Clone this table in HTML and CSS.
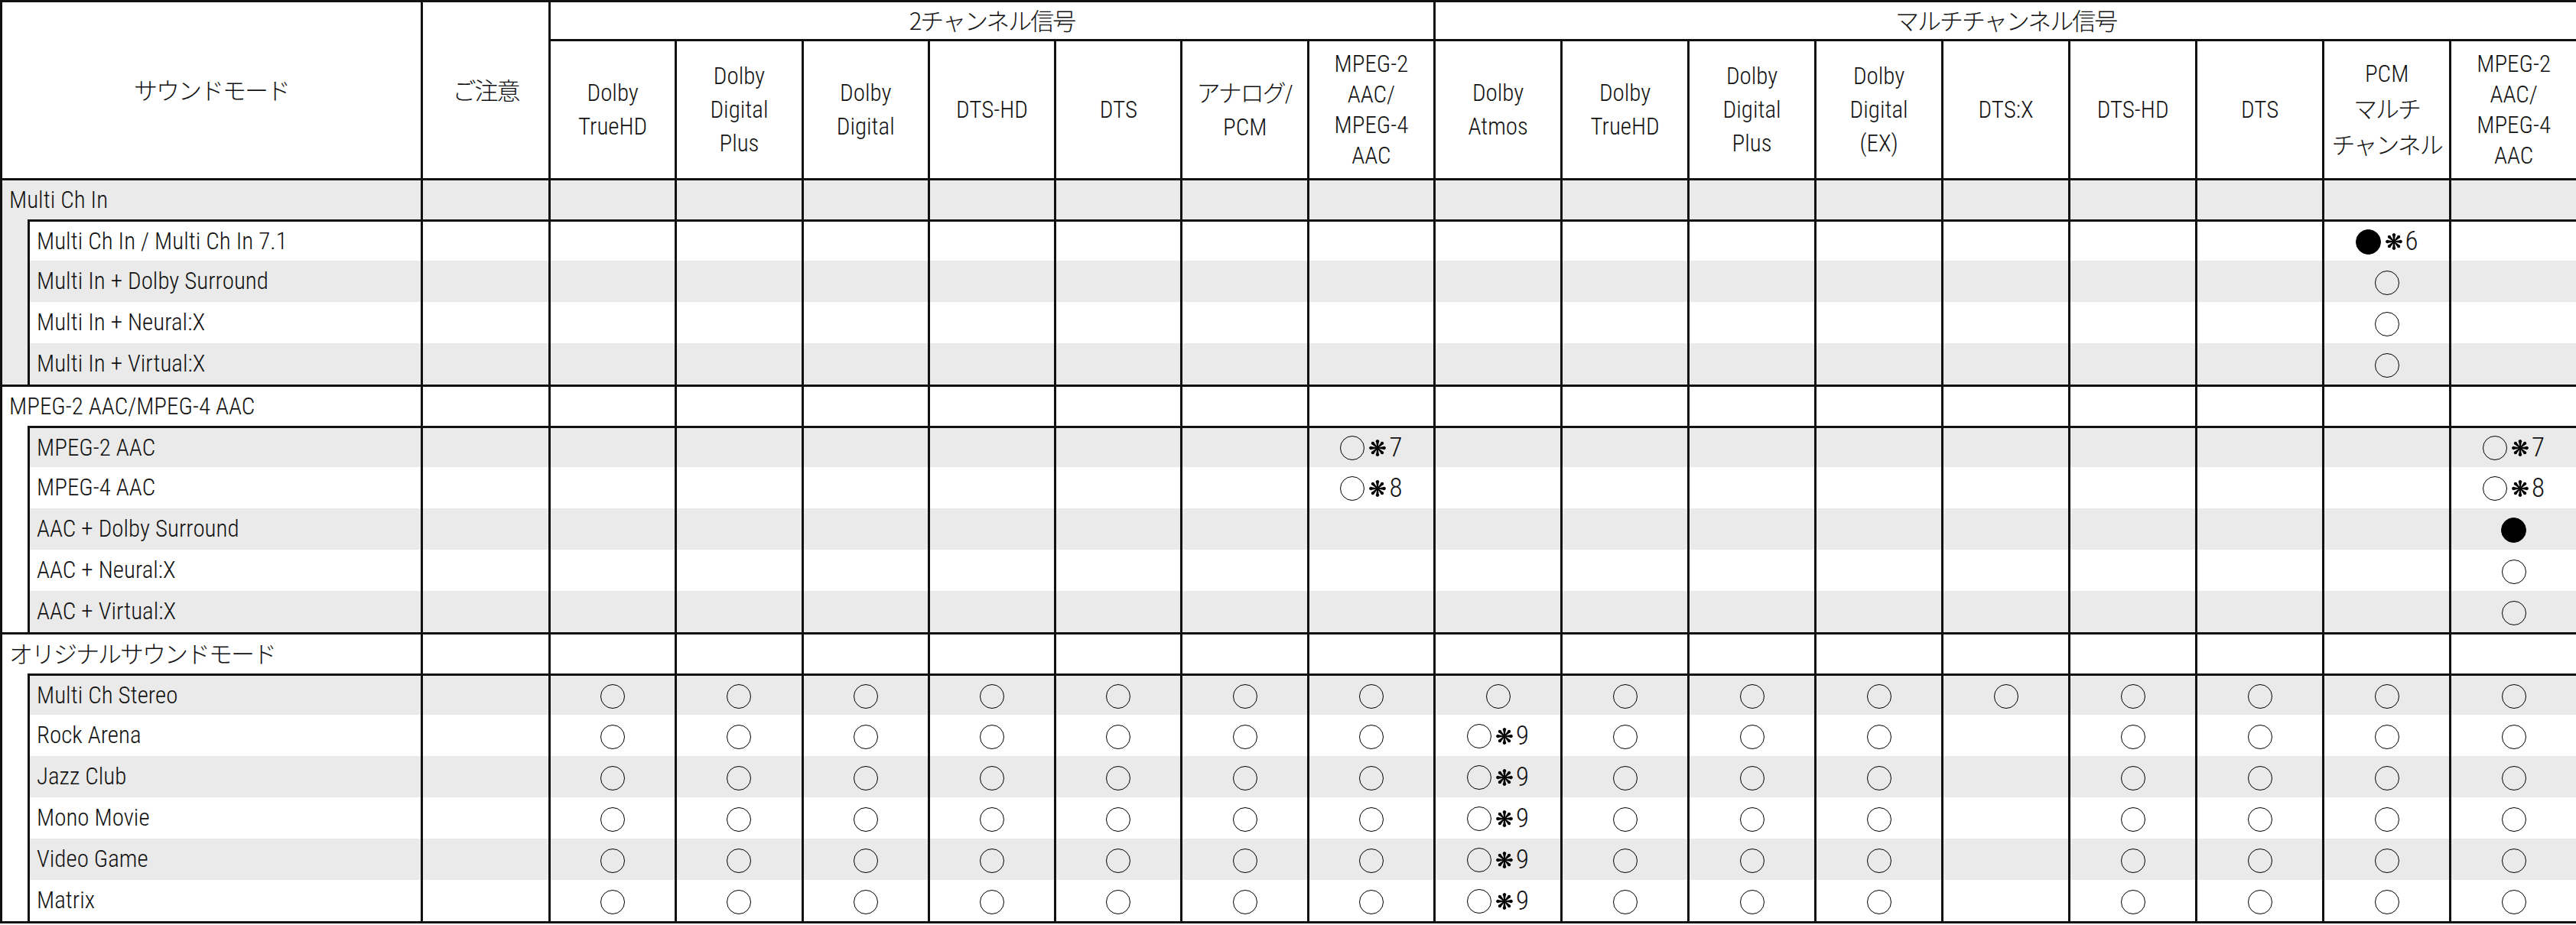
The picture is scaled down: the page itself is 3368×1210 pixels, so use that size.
FILE: index.html
```html
<!DOCTYPE html>
<html lang="ja">
<head>
<meta charset="utf-8">
<title>サウンドモード</title>
<link rel="stylesheet" href="styles.css">
</head>
<body>
<svg class="defs" aria-hidden="true">
  <symbol id="ast" viewBox="-11 -11 22 22">
    <path d="M-0.6 0 L-1.7 -7.2 A2.2 2.2 0 1 1 1.7 -7.2 L0.6 0 Z"/>
    <path transform="rotate(45)" d="M-0.6 0 L-1.7 -7.2 A2.2 2.2 0 1 1 1.7 -7.2 L0.6 0 Z"/>
    <path transform="rotate(90)" d="M-0.6 0 L-1.7 -7.2 A2.2 2.2 0 1 1 1.7 -7.2 L0.6 0 Z"/>
    <path transform="rotate(135)" d="M-0.6 0 L-1.7 -7.2 A2.2 2.2 0 1 1 1.7 -7.2 L0.6 0 Z"/>
    <path transform="rotate(180)" d="M-0.6 0 L-1.7 -7.2 A2.2 2.2 0 1 1 1.7 -7.2 L0.6 0 Z"/>
    <path transform="rotate(225)" d="M-0.6 0 L-1.7 -7.2 A2.2 2.2 0 1 1 1.7 -7.2 L0.6 0 Z"/>
    <path transform="rotate(270)" d="M-0.6 0 L-1.7 -7.2 A2.2 2.2 0 1 1 1.7 -7.2 L0.6 0 Z"/>
    <path transform="rotate(315)" d="M-0.6 0 L-1.7 -7.2 A2.2 2.2 0 1 1 1.7 -7.2 L0.6 0 Z"/>
  </symbol>
</svg>
<table class="modes">
  <colgroup>
    <col class="c-strip"><col class="c-label"><col class="c-note">
    <col class="c-2ch"><col class="c-2ch"><col class="c-2ch"><col class="c-2ch"><col class="c-2ch"><col class="c-2ch"><col class="c-2ch">
    <col class="c-mc"><col class="c-mc"><col class="c-mc"><col class="c-mc"><col class="c-mc"><col class="c-mc"><col class="c-mc"><col class="c-mc"><col class="c-mc">
  </colgroup>
  <thead>
    <tr class="h1">
      <th colspan="2" rowspan="2"><span class="jp">サウンドモード</span></th>
      <th rowspan="2"><span class="jp">ご注意</span></th>
      <th colspan="7"><span class="jp">2チャンネル信号</span></th>
      <th colspan="9"><span class="jp">マルチチャンネル信号</span></th>
    </tr>
    <tr class="h2">
      <th>Dolby<br>TrueHD</th>
      <th>Dolby<br>Digital<br>Plus</th>
      <th>Dolby<br>Digital</th>
      <th>DTS-HD</th>
      <th>DTS</th>
      <th><span class="jp">アナログ</span>/<br>PCM</th>
      <th class="tight">MPEG-2<br>AAC/<br>MPEG-4<br>AAC</th>
      <th>Dolby<br>Atmos</th>
      <th>Dolby<br>TrueHD</th>
      <th>Dolby<br>Digital<br>Plus</th>
      <th>Dolby<br>Digital<br>(EX)</th>
      <th>DTS:X</th>
      <th>DTS-HD</th>
      <th>DTS</th>
      <th>PCM<br><span class="jp">マルチ</span><br><span class="jp">チャンネル</span></th>
      <th class="tight">MPEG-2<br>AAC/<br>MPEG-4<br>AAC</th>
    </tr>
  </thead>
  <tbody>
    <!-- Multi Ch In -->
    <tr class="grp g">
      <td colspan="2" class="lbl">Multi Ch In</td>
      <td></td><td></td><td></td><td></td><td></td><td></td><td></td><td></td><td></td><td></td><td></td><td></td><td></td><td></td><td></td><td></td><td></td>
    </tr>
    <tr class="first">
      <td rowspan="4" class="strip sg"></td>
      <td class="lbl">Multi Ch In / Multi Ch In 7.1</td>
      <td></td>
      <td></td><td></td><td></td><td></td><td></td><td></td><td></td>
      <td></td><td></td><td></td><td></td><td></td><td></td><td></td>
      <td class="m"><span class="o f"></span><svg class="ast"><use href="#ast"/></svg><span class="n">6</span></td>
      <td></td>
    </tr>
    <tr class="g">
      <td class="lbl">Multi In + Dolby Surround</td>
      <td></td>
      <td></td><td></td><td></td><td></td><td></td><td></td><td></td>
      <td></td><td></td><td></td><td></td><td></td><td></td><td></td>
      <td class="m"><span class="o"></span></td>
      <td></td>
    </tr>
    <tr>
      <td class="lbl">Multi In + Neural:X</td>
      <td></td>
      <td></td><td></td><td></td><td></td><td></td><td></td><td></td>
      <td></td><td></td><td></td><td></td><td></td><td></td><td></td>
      <td class="m"><span class="o"></span></td>
      <td></td>
    </tr>
    <tr class="g">
      <td class="lbl">Multi In + Virtual:X</td>
      <td></td>
      <td></td><td></td><td></td><td></td><td></td><td></td><td></td>
      <td></td><td></td><td></td><td></td><td></td><td></td><td></td>
      <td class="m"><span class="o"></span></td>
      <td></td>
    </tr>

    <!-- MPEG-2 AAC/MPEG-4 AAC -->
    <tr class="grp">
      <td colspan="2" class="lbl">MPEG-2 AAC/MPEG-4 AAC</td>
      <td></td><td></td><td></td><td></td><td></td><td></td><td></td><td></td><td></td><td></td><td></td><td></td><td></td><td></td><td></td><td></td><td></td>
    </tr>
    <tr class="first g">
      <td rowspan="5" class="strip"></td>
      <td class="lbl">MPEG-2 AAC</td>
      <td></td>
      <td></td><td></td><td></td><td></td><td></td><td></td>
      <td class="m"><span class="o"></span><svg class="ast"><use href="#ast"/></svg><span class="n">7</span></td>
      <td></td><td></td><td></td><td></td><td></td><td></td><td></td><td></td>
      <td class="m"><span class="o"></span><svg class="ast"><use href="#ast"/></svg><span class="n">7</span></td>
    </tr>
    <tr>
      <td class="lbl">MPEG-4 AAC</td>
      <td></td>
      <td></td><td></td><td></td><td></td><td></td><td></td>
      <td class="m"><span class="o"></span><svg class="ast"><use href="#ast"/></svg><span class="n">8</span></td>
      <td></td><td></td><td></td><td></td><td></td><td></td><td></td><td></td>
      <td class="m"><span class="o"></span><svg class="ast"><use href="#ast"/></svg><span class="n">8</span></td>
    </tr>
    <tr class="g">
      <td class="lbl">AAC + Dolby Surround</td>
      <td></td>
      <td></td><td></td><td></td><td></td><td></td><td></td><td></td>
      <td></td><td></td><td></td><td></td><td></td><td></td><td></td><td></td>
      <td class="m"><span class="o f"></span></td>
    </tr>
    <tr>
      <td class="lbl">AAC + Neural:X</td>
      <td></td>
      <td></td><td></td><td></td><td></td><td></td><td></td><td></td>
      <td></td><td></td><td></td><td></td><td></td><td></td><td></td><td></td>
      <td class="m"><span class="o"></span></td>
    </tr>
    <tr class="g">
      <td class="lbl">AAC + Virtual:X</td>
      <td></td>
      <td></td><td></td><td></td><td></td><td></td><td></td><td></td>
      <td></td><td></td><td></td><td></td><td></td><td></td><td></td><td></td>
      <td class="m"><span class="o"></span></td>
    </tr>

    <!-- オリジナルサウンドモード -->
    <tr class="grp">
      <td colspan="2" class="lbl"><span class="jp">オリジナルサウンドモード</span></td>
      <td></td><td></td><td></td><td></td><td></td><td></td><td></td><td></td><td></td><td></td><td></td><td></td><td></td><td></td><td></td><td></td><td></td>
    </tr>
    <tr class="first g">
      <td rowspan="6" class="strip"></td>
      <td class="lbl">Multi Ch Stereo</td>
      <td></td>
      <td class="m"><span class="o"></span></td><td class="m"><span class="o"></span></td><td class="m"><span class="o"></span></td><td class="m"><span class="o"></span></td><td class="m"><span class="o"></span></td><td class="m"><span class="o"></span></td><td class="m"><span class="o"></span></td>
      <td class="m"><span class="o"></span></td><td class="m"><span class="o"></span></td><td class="m"><span class="o"></span></td><td class="m"><span class="o"></span></td><td class="m"><span class="o"></span></td><td class="m"><span class="o"></span></td><td class="m"><span class="o"></span></td><td class="m"><span class="o"></span></td><td class="m"><span class="o"></span></td>
    </tr>
    <tr>
      <td class="lbl">Rock Arena</td>
      <td></td>
      <td class="m"><span class="o"></span></td><td class="m"><span class="o"></span></td><td class="m"><span class="o"></span></td><td class="m"><span class="o"></span></td><td class="m"><span class="o"></span></td><td class="m"><span class="o"></span></td><td class="m"><span class="o"></span></td>
      <td class="m"><span class="o"></span><svg class="ast"><use href="#ast"/></svg><span class="n">9</span></td>
      <td class="m"><span class="o"></span></td><td class="m"><span class="o"></span></td><td class="m"><span class="o"></span></td><td></td><td class="m"><span class="o"></span></td><td class="m"><span class="o"></span></td><td class="m"><span class="o"></span></td><td class="m"><span class="o"></span></td>
    </tr>
    <tr class="g">
      <td class="lbl">Jazz Club</td>
      <td></td>
      <td class="m"><span class="o"></span></td><td class="m"><span class="o"></span></td><td class="m"><span class="o"></span></td><td class="m"><span class="o"></span></td><td class="m"><span class="o"></span></td><td class="m"><span class="o"></span></td><td class="m"><span class="o"></span></td>
      <td class="m"><span class="o"></span><svg class="ast"><use href="#ast"/></svg><span class="n">9</span></td>
      <td class="m"><span class="o"></span></td><td class="m"><span class="o"></span></td><td class="m"><span class="o"></span></td><td></td><td class="m"><span class="o"></span></td><td class="m"><span class="o"></span></td><td class="m"><span class="o"></span></td><td class="m"><span class="o"></span></td>
    </tr>
    <tr>
      <td class="lbl">Mono Movie</td>
      <td></td>
      <td class="m"><span class="o"></span></td><td class="m"><span class="o"></span></td><td class="m"><span class="o"></span></td><td class="m"><span class="o"></span></td><td class="m"><span class="o"></span></td><td class="m"><span class="o"></span></td><td class="m"><span class="o"></span></td>
      <td class="m"><span class="o"></span><svg class="ast"><use href="#ast"/></svg><span class="n">9</span></td>
      <td class="m"><span class="o"></span></td><td class="m"><span class="o"></span></td><td class="m"><span class="o"></span></td><td></td><td class="m"><span class="o"></span></td><td class="m"><span class="o"></span></td><td class="m"><span class="o"></span></td><td class="m"><span class="o"></span></td>
    </tr>
    <tr class="g">
      <td class="lbl">Video Game</td>
      <td></td>
      <td class="m"><span class="o"></span></td><td class="m"><span class="o"></span></td><td class="m"><span class="o"></span></td><td class="m"><span class="o"></span></td><td class="m"><span class="o"></span></td><td class="m"><span class="o"></span></td><td class="m"><span class="o"></span></td>
      <td class="m"><span class="o"></span><svg class="ast"><use href="#ast"/></svg><span class="n">9</span></td>
      <td class="m"><span class="o"></span></td><td class="m"><span class="o"></span></td><td class="m"><span class="o"></span></td><td></td><td class="m"><span class="o"></span></td><td class="m"><span class="o"></span></td><td class="m"><span class="o"></span></td><td class="m"><span class="o"></span></td>
    </tr>
    <tr>
      <td class="lbl">Matrix</td>
      <td></td>
      <td class="m"><span class="o"></span></td><td class="m"><span class="o"></span></td><td class="m"><span class="o"></span></td><td class="m"><span class="o"></span></td><td class="m"><span class="o"></span></td><td class="m"><span class="o"></span></td><td class="m"><span class="o"></span></td>
      <td class="m"><span class="o"></span><svg class="ast"><use href="#ast"/></svg><span class="n">9</span></td>
      <td class="m"><span class="o"></span></td><td class="m"><span class="o"></span></td><td class="m"><span class="o"></span></td><td></td><td class="m"><span class="o"></span></td><td class="m"><span class="o"></span></td><td class="m"><span class="o"></span></td><td class="m"><span class="o"></span></td>
    </tr>
  </tbody>
</table>
</body>
</html>
```

FILE: styles.css
```css
html, body {
  margin: 0;
  padding: 0;
  background: #fff;
}

body {
  font-family: Roboto, "Noto Sans CJK JP", sans-serif;
  font-stretch: 75%;
  font-weight: 350;
  font-size: 31px;
  color: #111;
}

.defs {
  position: absolute;
  width: 0;
  height: 0;
  overflow: hidden;
}

.modes {
  border-collapse: collapse;
  table-layout: fixed;
  width: 3368px;
  border: 3px solid #111;
}

.c-strip { width: 36px; }
.c-label { width: 514px; }
.c-note  { width: 167px; }
.c-2ch   { width: 165.3px; }
.c-mc    { width: 166px; }

.modes th {
  font-weight: 350;
  border: 3px solid #111;
  padding: 0;
  text-align: center;
  vertical-align: middle;
  line-height: 44px;
}

.h1 th { height: 48px; }
.h2 th { height: 179px; }
.modes th.tight { line-height: 40px; }

.jp {
  font-family: "Noto Sans CJK JP", sans-serif;
  font-weight: 300;
  font-size: 31px;
  letter-spacing: -2px;
}

.modes td {
  border-left: 3px solid #111;
  border-right: 3px solid #111;
  border-top: none;
  border-bottom: none;
  padding: 0;
  height: 54px;
  line-height: 40px;
  vertical-align: middle;
  white-space: nowrap;
  background: #fff;
}

.g td { background: #eaeaea; }

.modes tr.grp td,
.modes tr.first td {
  border-top: 3px solid #111;
  height: 51px;
}

.modes tr.first td.strip {
  border-top: none;
}

.modes td.strip { background: #fff; }
.modes td.strip.sg { background: #eaeaea; }

.modes td.lbl {
  padding-left: 9px;
  text-align: left;
}

.modes td.m {
  text-align: center;
  line-height: 36px;
}

.o {
  display: inline-block;
  box-sizing: border-box;
  width: 32px;
  height: 32px;
  border: 1px solid #000;
  border-radius: 50%;
  vertical-align: middle;
}

.o.f {
  background: #000;
  border-color: #000;
  width: 33px;
  height: 33px;
}

.ast {
  display: inline-block;
  width: 22px;
  height: 22px;
  margin-left: 6px;
  vertical-align: middle;
  fill: #000;
}

.n {
  display: inline-block;
  margin-left: 4px;
  font-size: 35px;
  line-height: 36px;
  vertical-align: middle;
}
```
